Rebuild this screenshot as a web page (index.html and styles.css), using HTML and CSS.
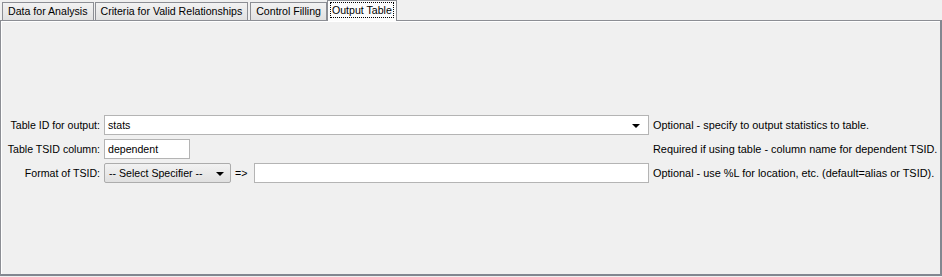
FILE: index.html
```html
<!DOCTYPE html>
<html>
<head>
<meta charset="utf-8">
<link rel="stylesheet" href="styles.css">
</head>
<body>
<div class="tabs">
  <div class="tab">Data for Analysis</div>
  <div class="tab">Criteria for Valid Relationships</div>
  <div class="tab">Control Filling</div>
  <div class="tab selected"><span class="focus">Output Table</span></div>
</div>
<div class="panel">
  <div class="form">
    <div class="label">Table ID for output:</div>
    <div class="field">
      <div class="input wide combo-edit"><span>stats</span><span class="arrow"></span></div>
    </div>
    <div class="help">Optional - specify to output statistics to table.</div>

    <div class="label">Table TSID column:</div>
    <div class="field">
      <div class="input short"><span>dependent</span></div>
    </div>
    <div class="help">Required if using table - column name for dependent TSID.</div>

    <div class="label">Format of TSID:</div>
    <div class="field">
      <div class="select"><span>-- Select Specifier --</span><span class="arrow"></span></div>
      <span class="arrowtext">=&gt;</span>
      <div class="input grow"></div>
    </div>
    <div class="help">Optional - use %L for location, etc. (default=alias or TSID).</div>
  </div>
</div>
</body>
</html>
```
FILE: styles.css
```css
html, body {
  margin: 0;
  padding: 0;
  background: #f0f0f0;
  font-family: "Liberation Sans", Arial, sans-serif;
  font-size: 10.6px;
  color: #000;
  width: 942px;
  height: 277px;
  overflow: hidden;
}

.tabs {
  display: flex;
  align-items: flex-end;
  height: 20px;
  padding-left: 2px;
  position: relative;
  z-index: 1;
}

.tab {
  box-sizing: border-box;
  height: 18px;
  padding: 0 5px;
  margin-right: 1px;
  border: 1px solid #8c8e94;
  border-bottom: none;
  background: linear-gradient(#f2f2f2, #e1e1e1);
  line-height: 17px;
  white-space: nowrap;
}

.tab:nth-child(2) { margin-right: 2px; }

.tab.selected {
  height: 21px;
  margin-bottom: -1px;
  margin-left: -1px;
  padding: 0 2px;
  background: #fcfcfc;
  border-color: #8c8e94;
  line-height: 18px;
}

.focus {
  display: inline-block;
  padding: 0 2px;
  outline: 1px dotted #000;
  outline-offset: -1px;
  line-height: 16px;
  margin-top: 1px;
}

.panel {
  box-sizing: border-box;
  height: 256px;
  width: 942px;
  border: 1px solid #8c8e94;
  border-right: 2px solid #828790;
  border-bottom: 2px solid #828790;
  background: #f0f0f0;
  box-shadow: inset 1px 1px 0 #ffffff;
}

.form {
  display: grid;
  grid-template-columns: 99px 545px auto;
  column-gap: 4px;
  row-gap: 4px;
  padding-top: 94px;
  align-items: center;
}

.label {
  text-align: right;
  white-space: nowrap;
}

.field {
  display: flex;
  align-items: center;
  height: 20px;
}

.help {
  white-space: nowrap;
  font-size: 10.9px;
}

.input {
  box-sizing: border-box;
  height: 20px;
  border: 1px solid #b4b4b4;
  background: #fff;
  display: flex;
  align-items: center;
  padding-left: 3px;
}

.wide { width: 545px; justify-content: space-between; padding-right: 8px; }
.short { width: 86px; }
.grow { width: 395px; }

.arrow {
  width: 0;
  height: 0;
  border-left: 4px solid transparent;
  border-right: 4px solid transparent;
  border-top: 4px solid #000;
  margin-top: 2px;
}

.select {
  box-sizing: border-box;
  width: 127px;
  height: 20px;
  border: 1px solid #acacac;
  border-radius: 2px;
  background: linear-gradient(#f2f2f2, #e0e0e0);
  display: flex;
  align-items: center;
  justify-content: space-between;
  padding: 0 6px 0 4px;
}

.arrowtext {
  width: 23px;
  padding-left: 4px;
  box-sizing: border-box;
}
```
